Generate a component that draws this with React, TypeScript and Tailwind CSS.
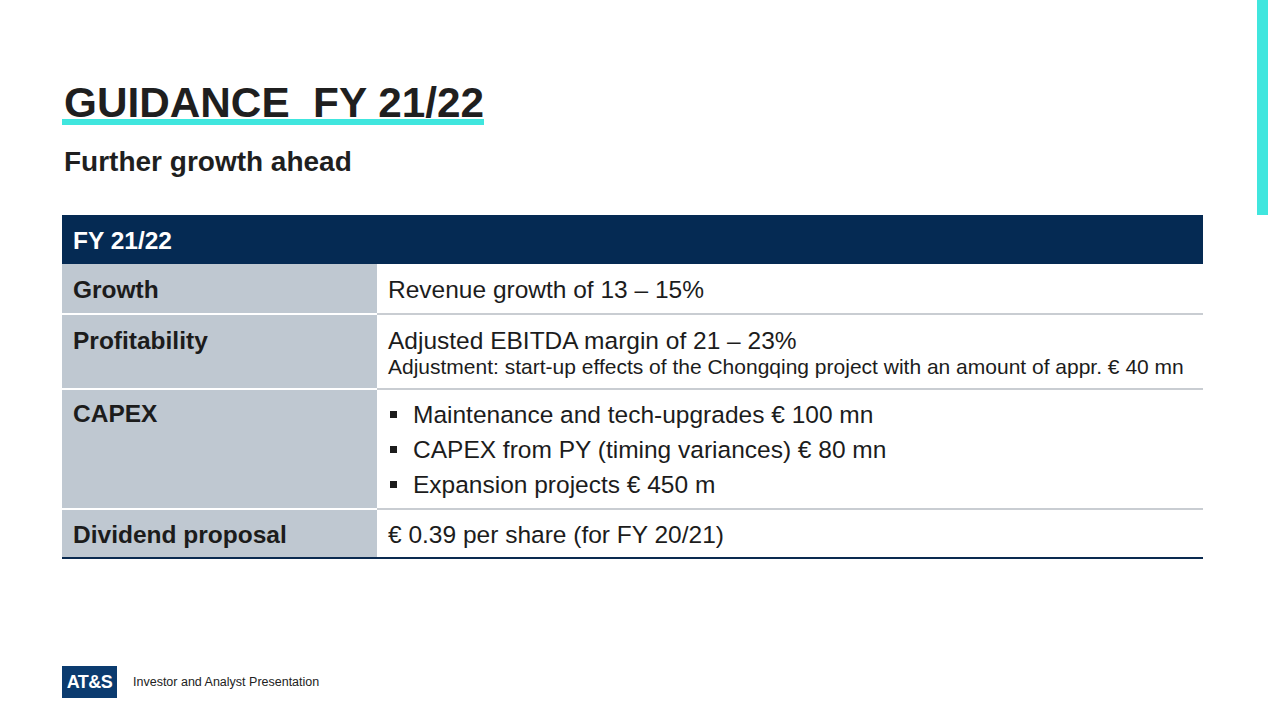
const capex = [
  'Maintenance and tech-upgrades € 100 mn',
  'CAPEX from PY (timing variances) € 80 mn',
  'Expansion projects € 450 m',
];

function Row({
  label,
  children,
  labelPad = 'pt-[12px]',
}: {
  label: string;
  children: React.ReactNode;
  labelPad?: string;
}) {
  return (
    <div className="flex">
      <div
        className={`w-[315px] shrink-0 border-b-2 border-white bg-[#bfc8d1] pl-[11px] text-[24.5px] font-bold leading-[28px] text-[#1c1c1c] ${labelPad}`}
      >
        {label}
      </div>
      <div className="flex-1 border-b-2 border-[#c9cdd2] pl-[11px] text-[24.5px] leading-[28px] text-[#1c1c1c]">
        {children}
      </div>
    </div>
  );
}

export default function App() {
  return (
    <div
      className="flex h-[708px] w-[1268px] bg-white"
      style={{ fontFamily: '"Liberation Sans", Arial, sans-serif' }}
    >
      <div className="flex flex-1 flex-col pl-[62px]">
        {/* Title */}
        <div className="pt-[87px]">
          <h1 className="inline-block whitespace-pre border-b-[6px] border-[#40e6de] pl-[2px] text-[42.3px] font-bold leading-[32px] text-[#1f1f1f]">
            {'GUIDANCE  FY 21/22'}
          </h1>
        </div>
        <p className="mt-[21px] pl-[2px] text-[28px] font-bold leading-[32px] text-[#1f1f1f]">
          Further growth ahead
        </p>

        {/* Table */}
        <div className="mt-[37px] w-[1141px] border-b-2 border-[#0a2a50]">
          <div className="bg-[#052a53] pb-[9px] pl-[11px] pt-[12px] text-[24.5px] font-bold leading-[28px] text-white">
            FY 21/22
          </div>
          <Row label="Growth">
            <div className="pb-[9px] pt-[12px]">Revenue growth of 13 – 15%</div>
          </Row>
          <Row label="Profitability">
            <div className="pb-[9px] pt-[12px]">
              <div>Adjusted EBITDA margin of 21 – 23%</div>
              <div className="text-[21px] leading-[24px]">
                Adjustment: start-up effects of the Chongqing project with an amount of appr. € 40 mn
              </div>
            </div>
          </Row>
          <Row label="CAPEX" labelPad="pt-[10px]">
            <ul className="pb-[6px] pt-[7px]">
              {capex.map((item) => (
                <li key={item} className="flex items-center leading-[35px]">
                  <span className="ml-[2px] mr-[16px] h-[7px] w-[7px] shrink-0 bg-[#1c1c1c]" />
                  {item}
                </li>
              ))}
            </ul>
          </Row>
          <div className="flex">
            <div className="w-[315px] shrink-0 bg-[#bfc8d1] pb-[8px] pl-[11px] pt-[11px] text-[24.5px] font-bold leading-[28px] text-[#1c1c1c]">
              Dividend proposal
            </div>
            <div className="flex-1 pb-[8px] pl-[11px] pt-[11px] text-[24.5px] leading-[28px] text-[#1c1c1c]">
              € 0.39 per share (for FY 20/21)
            </div>
          </div>
        </div>

        {/* Footer */}
        <div className="mt-auto flex items-center gap-[16px] pb-[10px]">
          <div className="flex h-[32px] w-[55px] items-center justify-center bg-[#0b3b6f] text-[18px] font-bold tracking-[-0.5px] text-white">
            AT&amp;S
          </div>
          <span className="text-[12.5px] text-[#222]">Investor and Analyst Presentation</span>
        </div>
      </div>

      {/* Right accent */}
      <div className="w-[11px] shrink-0">
        <div className="h-[215px] bg-[#40e6de]" />
      </div>
    </div>
  );
}
